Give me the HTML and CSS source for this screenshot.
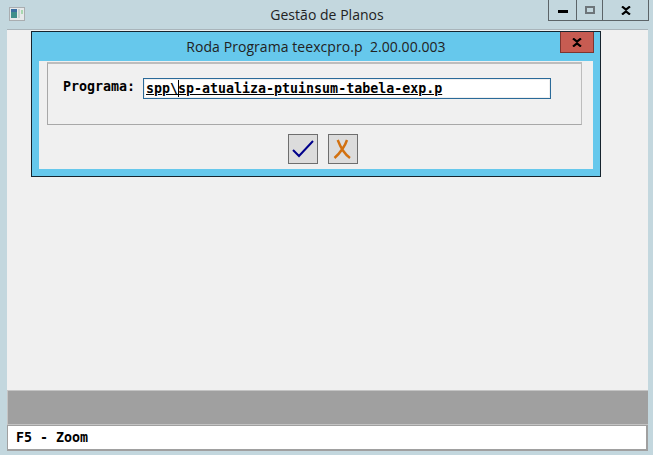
FILE: index.html
```html
<!DOCTYPE html>
<html lang="pt">
<head>
<meta charset="utf-8">
<title>Gestão de Planos</title>
<link rel="stylesheet" href="styles.css">
</head>
<body>
<div class="window">
  <header class="titlebar">
    <svg class="appicon" width="16" height="14" viewBox="0 0 16 14">
      <rect x="0.5" y="0.5" width="15" height="13" fill="#e6e9ea" stroke="#a9adb0"/>
      <rect x="2" y="2" width="6" height="9" fill="#3f8f8a"/>
      <rect x="2" y="2" width="6" height="3" fill="#3a6ea0"/>
      <rect x="9" y="2" width="2" height="9" fill="#c5d2d0"/>
      <rect x="12" y="3" width="2" height="4" fill="#a8d8b0"/>
    </svg>
    <span class="wintitle">Gestão de Planos</span>
    <div class="winbtns">
      <div class="winbtn min"><span class="minglyph"></span></div>
      <div class="winbtn max"><span class="maxglyph"></span></div>
      <div class="winbtn close">
        <svg width="10" height="9" viewBox="0 0 10 9"><path d="M1 .5 5 3.6 9 .5M1 8.5 5 5.4 9 8.5" fill="none" stroke="#000" stroke-width="2.2"/></svg>
      </div>
    </div>
  </header>
  <main class="client">
    <div class="workspace"></div>
    <div class="graybar"></div>
    <div class="status">F5 - Zoom</div>
  </main>
  <section class="dialog">
    <div class="dlgtitle">
      <span>Roda Programa teexcpro.p&nbsp; 2.00.00.003</span>
      <div class="dlgclose">
        <svg width="10" height="9" viewBox="0 0 10 9"><path d="M1 .5 5 3.6 9 .5M1 8.5 5 5.4 9 8.5" fill="none" stroke="#000" stroke-width="2.2"/></svg>
      </div>
    </div>
    <div class="dlgbody">
      <div class="group">
        <span class="label">Programa:</span>
        <div class="field"><span class="value">spp\sp-atualiza-ptuinsum-tabela-exp.p</span><i class="caret"></i></div>
      </div>
      <div class="actions">
        <button class="tool" type="button">
          <svg width="24" height="20" viewBox="0 0 24 20"><path d="M2 11 8 17 22 2" fill="none" stroke="#00008b" stroke-width="2"/></svg>
        </button>
        <button class="tool" type="button">
          <svg width="20" height="22" viewBox="0 0 20 22"><path d="M4.7 2C7 8 10 15 17 20M14 2C12 8 8 14 1.5 20" fill="none" stroke="#d2700f" stroke-width="2.4"/></svg>
        </button>
      </div>
    </div>
  </section>
</div>
</body>
</html>
```
FILE: styles.css
```css
* { box-sizing: border-box; }
html, body { margin: 0; height: 100%; }
body { background: #c3d7de; overflow: hidden; }
.window { position: relative; width: 653px; height: 455px; display: flex; flex-direction: column; padding: 0 5px 4px 7px; }
.titlebar { height: 29px; flex: none; display: flex; align-items: flex-start; position: relative; margin: 0 -5px 0 -7px; }
.appicon { position: absolute; left: 9px; top: 7px; }
.wintitle { flex: 1; text-align: center; font: 14px/30px "Open Sans", "Liberation Sans", sans-serif; color: #222; letter-spacing: .03px; padding-left: 1px; }
.winbtns { position: absolute; left: 548px; top: 0; display: flex; height: 21px; border: 1px solid #5c6468; border-top: 0; }
.winbtn { height: 20px; display: flex; align-items: center; justify-content: center; border-right: 1px solid #5c6468; }
.winbtn:last-child { border-right: 0; }
.min { width: 28px; }
.max { width: 26px; }
.close { width: 45px; }
.minglyph { width: 10px; height: 3px; background: #000; margin-top: 3px; }
.maxglyph { width: 10px; height: 8px; border: 2px solid #6d7479; }
.client { flex: 1; display: flex; flex-direction: column; background: #f0f0f0; border-top: 1px solid #a9b4ba; }
.workspace { flex: 1; }
.graybar { height: 35px; background: #a0a0a0; border: 1px solid #c4c4c4; border-width: 1px 0 1px 1px; }
.status { height: 26px; background: #fff; border: 1px solid #a0a0a0; border-width: 1px 2px 2px 1px; padding-left: 8px; font: bold 13.3px/24px "DejaVu Sans Mono", "Liberation Mono", monospace; color: #000; }
.dialog { position: absolute; left: 31px; top: 31px; width: 570px; height: 146px; border: 1px solid #16242e; background: #66c8ec; display: flex; flex-direction: column; padding: 0 7px 7px; }
.dlgtitle { height: 29px; flex: none; position: relative; text-align: center; font: 14px/29px "Open Sans", "Liberation Sans", sans-serif; color: #222; letter-spacing: .06px; }
.dlgclose { position: absolute; right: -1px; top: 0; width: 34px; height: 21px; background: #c75c52; border: 1px solid #7d3530; border-top: 0; display: flex; align-items: center; justify-content: center; }
.dlgbody { flex: 1; background: #f0f0f0; padding: 1px 11px 0 8px; display: flex; flex-direction: column; }
.group { height: 63px; border: 1px solid #a8a8a8; border-top: 2px solid #bdbdbd; border-right-color: #bdbdbd; padding: 14px 0 0 15px; display: flex; align-items: flex-start; }
.label { font: bold 13.3px/20px "DejaVu Sans Mono", "Liberation Mono", monospace; color: #000; width: 80px; margin-top: -1px; }
.field { position: relative; width: 408px; height: 21px; background: #fff; border: 1px solid #2a6a99; box-shadow: inset 0 0 0 1px #efefef; padding-left: 2px; font: bold 13.3px/19px "DejaVu Sans Mono", "Liberation Mono", monospace; color: #000; }
.value { text-decoration: underline; }
.caret { position: absolute; left: 34px; top: 1px; height: 17px; width: 1px; background: #000; }
.actions { display: flex; justify-content: center; gap: 10px; margin-top: 9px; padding-left: 16px; }
.tool { width: 30px; height: 30px; padding: 0; background: #dcdcdc; border: 1px solid #6e6e6e; display: flex; align-items: center; justify-content: center; }
```
